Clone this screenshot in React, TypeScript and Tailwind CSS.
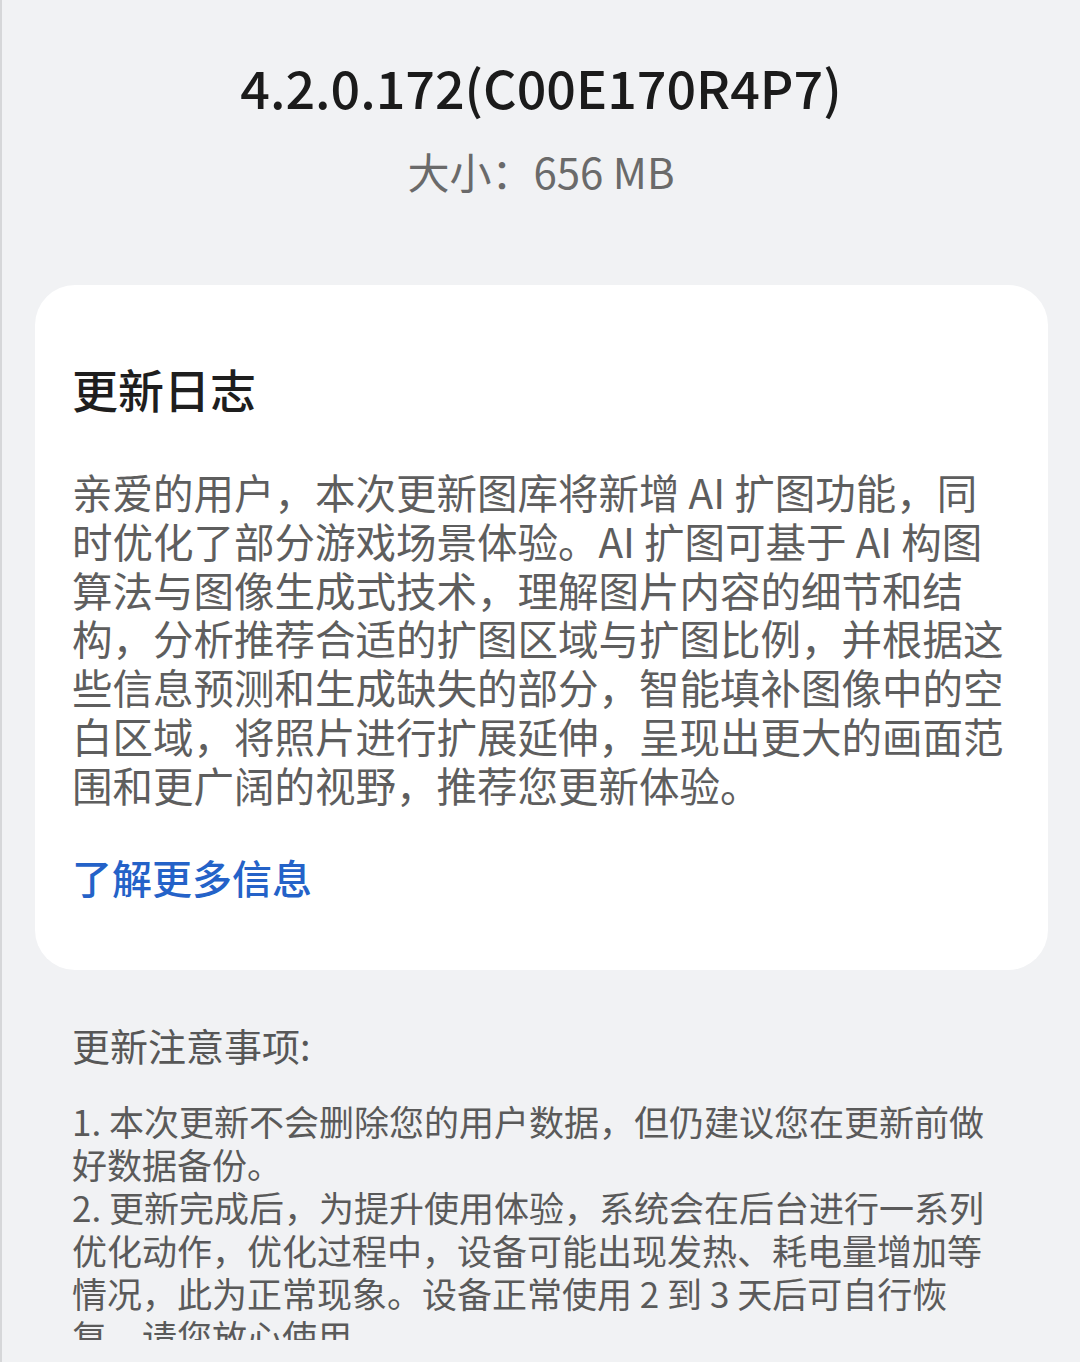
import React from "react";

const FONT = '"Noto Sans CJK SC", "Noto Sans", sans-serif';

const body = [
  "亲爱的用户，本次更新图库将新增 AI 扩图功能，同",
  "时优化了部分游戏场景体验。AI 扩图可基于 AI 构图",
  "算法与图像生成式技术，理解图片内容的细节和结",
  "构，分析推荐合适的扩图区域与扩图比例，并根据这",
  "些信息预测和生成缺失的部分，智能填补图像中的空",
  "白区域，将照片进行扩展延伸，呈现出更大的画面范",
  "围和更广阔的视野，推荐您更新体验。",
];

const notes = [
  "1. 本次更新不会删除您的用户数据，但仍建议您在更新前做",
  "好数据备份。",
  "2. 更新完成后，为提升使用体验，系统会在后台进行一系列",
  "优化动作，优化过程中，设备可能出现发热、耗电量增加等",
  "情况，此为正常现象。设备正常使用 2 到 3 天后可自行恢",
  "复。请您放心使用。",
];

export default function App() {
  return (
    <div
      className="w-full h-[1362px] bg-[#f1f2f4] border-l-2 border-[#d6d7d9] overflow-hidden"
      style={{ fontFamily: FONT }}
    >
      <div className="h-[1340px] overflow-hidden flex flex-col">
        <div className="pt-[51px] flex flex-col items-center">
          <div className="text-[52px] leading-[72px] font-medium text-[#1b1b1b]">
            4.2.0.172(C00E170R4P7)
          </div>
          <div className="mt-[22px] text-[42px] leading-[52px] text-[#6a6a6a]">
            大小：656 MB
          </div>
        </div>

        <div className="mt-[88px] ml-[33px] w-[1013px] bg-white rounded-[40px] px-[37px] pt-[75px] pb-[68px]">
          <div className="text-[46px] leading-[56px] font-medium text-[#1e1e1e]">
            更新日志
          </div>
          <div className="mt-[52px] text-[40.5px] leading-[48.8px] text-[#5e5e5e]">
            {body.map((l, i) => (
              <div key={i} className="whitespace-nowrap">
                {l}
              </div>
            ))}
          </div>
          <div className="mt-[42px] text-[40px] leading-[50px] font-medium text-[#2462c8]">
            了解更多信息
          </div>
        </div>

        <div className="px-[70px]">
          <div className="mt-[52px] text-[38px] leading-[46px] text-[#575757]">
            更新注意事项:
          </div>
          <div className="mt-[31px] text-[35px] leading-[43px] text-[#5a5a5a]">
            {notes.map((l, i) => (
              <div key={i} className="whitespace-nowrap">
                {l}
              </div>
            ))}
          </div>
        </div>
      </div>
    </div>
  );
}
